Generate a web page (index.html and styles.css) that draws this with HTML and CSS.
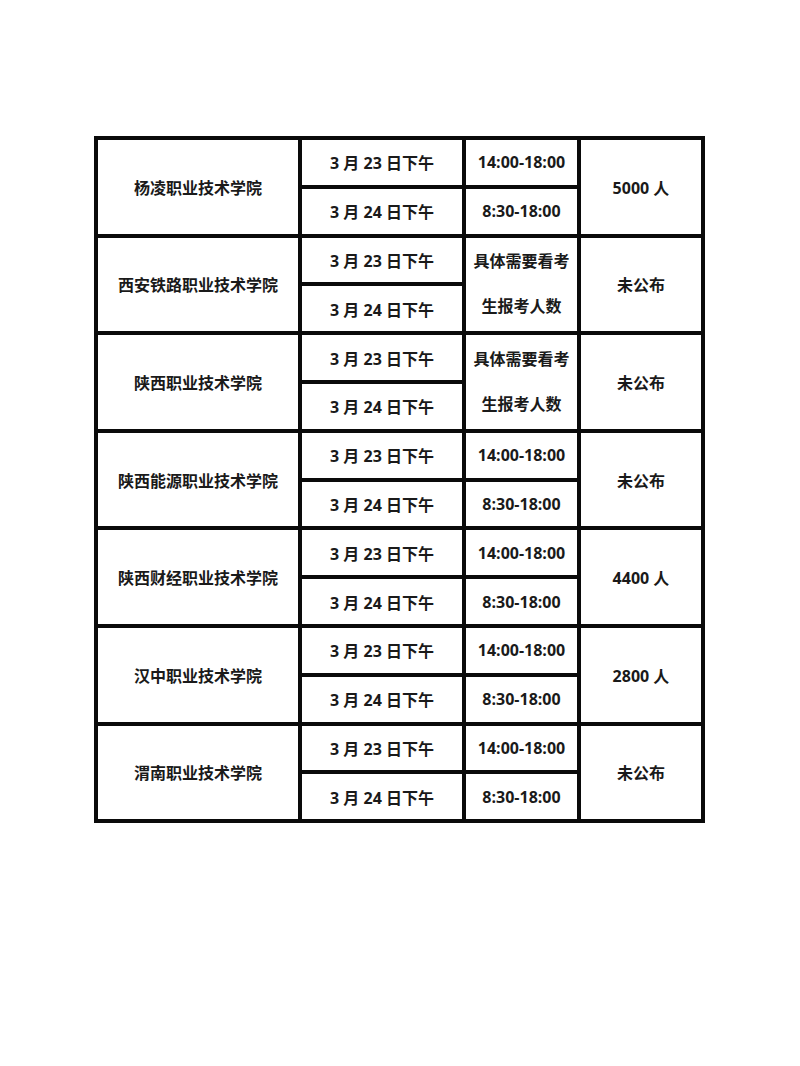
FILE: index.html
```html
<!DOCTYPE html>
<html lang="zh-CN">
<head>
<meta charset="utf-8">
<title>院校安排</title>
<link rel="stylesheet" href="styles.css">
</head>
<body>
<div class="page">
  <div class="table">
    <div class="c name r1">杨凌职业技术学院</div>
    <div class="c date">3 月 23 日下午</div>
    <div class="c time">14:00-18:00</div>
    <div class="c num r1">5000 人</div>
    <div class="c date">3 月 24 日下午</div>
    <div class="c time">8:30-18:00</div>

    <div class="c name">西安铁路职业技术学院</div>
    <div class="c date">3 月 23 日下午</div>
    <div class="c time span">具体需要看考<br>生报考人数</div>
    <div class="c num">未公布</div>
    <div class="c date">3 月 24 日下午</div>

    <div class="c name">陕西职业技术学院</div>
    <div class="c date">3 月 23 日下午</div>
    <div class="c time span">具体需要看考<br>生报考人数</div>
    <div class="c num">未公布</div>
    <div class="c date">3 月 24 日下午</div>

    <div class="c name">陕西能源职业技术学院</div>
    <div class="c date">3 月 23 日下午</div>
    <div class="c time">14:00-18:00</div>
    <div class="c num">未公布</div>
    <div class="c date">3 月 24 日下午</div>
    <div class="c time">8:30-18:00</div>

    <div class="c name">陕西财经职业技术学院</div>
    <div class="c date">3 月 23 日下午</div>
    <div class="c time">14:00-18:00</div>
    <div class="c num">4400 人</div>
    <div class="c date">3 月 24 日下午</div>
    <div class="c time">8:30-18:00</div>

    <div class="c name">汉中职业技术学院</div>
    <div class="c date">3 月 23 日下午</div>
    <div class="c time">14:00-18:00</div>
    <div class="c num">2800 人</div>
    <div class="c date">3 月 24 日下午</div>
    <div class="c time">8:30-18:00</div>

    <div class="c name">渭南职业技术学院</div>
    <div class="c date">3 月 23 日下午</div>
    <div class="c time">14:00-18:00</div>
    <div class="c num">未公布</div>
    <div class="c date">3 月 24 日下午</div>
    <div class="c time">8:30-18:00</div>
  </div>
</div>
</body>
</html>
```

FILE: styles.css
```css
html, body {
  margin: 0;
  padding: 0;
  background: #ffffff;
}

.page {
  padding: 136px 0 0 94px;
}

.table {
  display: grid;
  grid-template-columns: 200px 160px 111px 120px;
  grid-template-rows: repeat(14, 44.8px);
  grid-auto-flow: row dense;
  gap: 4px;
  padding: 4px;
  width: max-content;
  background: #0a0a0a;
  font-family: "Open Sans", "Noto Sans CJK SC", sans-serif;
  font-weight: 700;
  font-size: 16px;
  color: #1a1a1a;
}

.c {
  background: #ffffff;
  display: flex;
  align-items: center;
  justify-content: center;
  text-align: center;
  white-space: nowrap;
}

.name { grid-column: 1; grid-row: span 2; }
.date { grid-column: 2; }
.time { grid-column: 3; }
.num  { grid-column: 4; grid-row: span 2; }
.span { grid-row: span 2; line-height: 45px; }
```
